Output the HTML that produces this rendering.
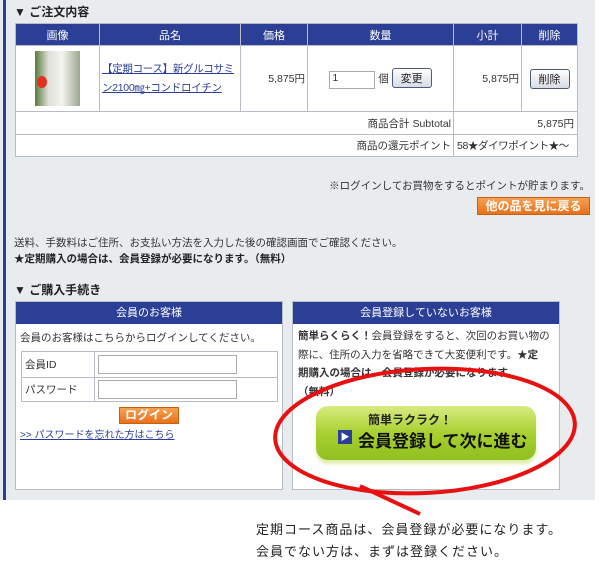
<!DOCTYPE html>
<html><head><meta charset="utf-8"><style>
*{margin:0;padding:0;box-sizing:border-box}
body{width:600px;height:568px;background:#fff;position:relative;overflow:hidden;font-family:"Liberation Sans","Noto Sans CJK JP",sans-serif;font-size:10.5px;color:#333}
#bg{position:absolute;left:0;top:0;width:595px;height:500px;background:#e8ecef}
#bl{position:absolute;left:3px;top:0;width:3px;height:500px;background:#2b3f96}
.a{position:absolute;white-space:nowrap}
.h{font-weight:bold;font-size:12px;color:#222}
table{border-collapse:collapse;position:absolute;background:#fff;table-layout:fixed}
td,th{border:1px solid #b8bcc4;font-weight:normal;white-space:nowrap;overflow:hidden}
th{background:#2b3f96;color:#fff;height:22px;font-size:11px}
.btn{display:inline-block;border:1px solid #4a5a80;border-radius:3px;background:linear-gradient(#fff,#d8dce4);padding:1px 8px;font-size:11px;color:#222}
.or{background:linear-gradient(#f8a050,#e8701c);color:#fff;font-weight:bold;font-size:12px;text-align:center;border:1px solid #c86010}
.box{position:absolute;background:#fff;border:1px solid #b8bcc4}
.bh{background:#2b3f96;color:#fff;height:22px;line-height:22px;text-align:center;font-size:11px}
.inp{position:absolute;background:#fff;border:1px solid #aaa;height:19px}
</style></head><body>
<div id="bg"></div><div id="bl"></div>
<div class="a h" style="left:14px;top:3px">▼ ご注文内容</div>
<table style="left:15px;top:23px;width:563px">
<tr><th style="width:84px">画像</th><th style="width:141px">品名</th><th style="width:67px">価格</th><th style="width:146px">数量</th><th style="width:68px">小計</th><th>削除</th></tr>
<tr style="height:66px"><td style="text-align:center"><div style="display:inline-block;width:45px;height:55px;background:linear-gradient(90deg,#5a7a3a,#e0e0d8 30%,#f4f4f0 60%,#9aa890);position:relative;vertical-align:middle"><div style="position:absolute;left:2px;top:25px;width:10px;height:12px;background:#e03020;border-radius:50%"></div></div></td>
<td style="padding-left:2px;line-height:19px;font-size:10.5px;letter-spacing:-0.3px"><span style="color:#2b3f96;text-decoration:underline">【定期コース】新グルコサミ<br>ン2100㎎+コンドロイチン</span></td>
<td style="text-align:right;padding-right:2px">5,875円</td>
<td style="text-align:center"><span style="display:inline-block;width:46px;height:18px;border:1px solid #aaa;text-align:left;padding-left:2px;vertical-align:middle">1</span> 個 <span class="btn">変更</span></td>
<td style="text-align:right;padding-right:2px">5,875円</td>
<td style="text-align:center"><span class="btn">削除</span></td></tr>
<tr style="height:23px"><td colspan="4" style="text-align:right;padding-right:2px">商品合計 Subtotal</td><td colspan="2" style="text-align:right;padding-right:3px">5,875円</td></tr>
<tr style="height:22px"><td colspan="4" style="text-align:right;padding-right:2px">商品の還元ポイント</td><td colspan="2" style="padding-left:3px;letter-spacing:-0.4px">58★ダイワポイント★～</td></tr>
</table>
<div class="a" style="right:10px;top:178px">※ログインしてお買物をするとポイントが貯まります。</div>
<div class="a or" style="left:477px;top:197px;width:113px;height:18px;line-height:16px">他の品を見に戻る</div>
<div class="a" style="left:14px;top:235px">送料、手数料はご住所、お支払い方法を入力した後の確認画面でご確認ください。</div>
<div class="a" style="left:14px;top:251px;font-weight:bold;color:#222">★定期購入の場合は、会員登録が必要になります。（無料）</div>
<div class="a h" style="left:14px;top:281px">▼ ご購入手続き</div>
<div class="box" style="left:15px;top:301px;width:268px;height:189px">
<div class="bh">会員のお客様</div>
<div class="a" style="left:4px;top:28px">会員のお客様はこちらからログインしてください。</div>
<div class="a" style="left:5px;top:49px;width:257px;height:51px;border:1px solid #b8bcc4"><div style="position:absolute;left:72px;top:0;width:1px;height:49px;background:#b8bcc4"></div><div style="position:absolute;left:0;top:25px;width:255px;height:1px;background:#b8bcc4"></div>
<div class="a" style="left:3px;top:5px">会員ID</div><div class="a" style="left:3px;top:30px">パスワード</div>
<div class="inp" style="left:76px;top:3px;width:139px"></div><div class="inp" style="left:76px;top:28px;width:139px"></div></div>
<div class="a or" style="left:103px;top:105px;width:60px;height:17px;line-height:15px">ログイン</div>
<div class="a" style="left:4px;top:124px;font-size:10px;color:#2b3f96;text-decoration:underline">&gt;&gt; パスワードを忘れた方はこちら</div>
</div>
<div class="box" style="left:292px;top:301px;width:268px;height:189px">
<div class="bh">会員登録していないお客様</div>
<div style="padding:3px 3px 3px 5px;line-height:18.5px;white-space:nowrap;font-size:10.5px"><b>簡単らくらく！</b>会員登録をすると、次回のお買い物の<br>際に、住所の入力を省略できて大変便利です。<b>★定</b><br><b>期購入の場合は、会員登録が必要になります。</b><br><b>（無料）</b></div>
<div class="a" style="left:23px;top:104px;width:220px;height:54px;border-radius:12px;background:linear-gradient(#d8ec80,#a8d030 50%,#90c020);box-shadow:0 4px 3px #e0ecb0">
<div class="a" style="left:52px;top:5px;font-weight:bold;font-size:12px;color:#222">簡単ラクラク！</div>
<div class="a" style="left:22px;top:24px;width:14px;height:14px;background:#2b3f96;color:#fff;font-size:9px;line-height:14px;text-align:center">▶</div>
<div class="a" style="left:42px;top:21px;font-weight:bold;font-size:17px;color:#111">会員登録して次に進む</div></div>
</div>
<svg class="a" style="left:0;top:0" width="600" height="568"><ellipse cx="425" cy="431" rx="150" ry="62" fill="none" stroke="#e81010" stroke-width="4" transform="rotate(-3 425 431)"/><line x1="360" y1="486" x2="420" y2="514" stroke="#e81010" stroke-width="4"/></svg>
<div class="a" style="left:256px;top:519px;font-size:13px;color:#222;letter-spacing:1px">定期コース商品は、会員登録が必要になります。</div>
<div class="a" style="left:256px;top:541px;font-size:13px;color:#222;letter-spacing:1px">会員でない方は、まずは登録ください。</div>
</body></html>
